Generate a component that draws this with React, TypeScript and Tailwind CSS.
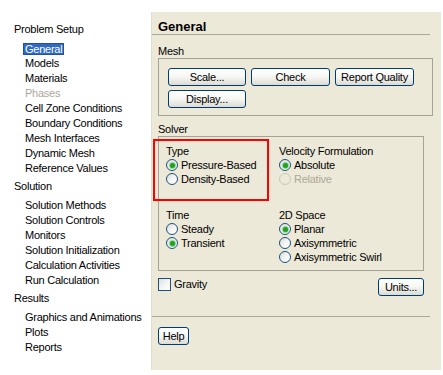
import React from "react";

const font = "font-['Liberation_Sans',Arial,sans-serif]";

function TreeHeader({ children }: { children: React.ReactNode }) {
  return <div className="h-[15px] leading-[15px] pl-[14px] text-black">{children}</div>;
}

function TreeItem({ children, selected, disabled }: { children: React.ReactNode; selected?: boolean; disabled?: boolean }) {
  return (
    <div className="h-[15px] leading-[15px] pl-[25px]">
      {selected ? (
        <span className="inline-block align-middle leading-[11px] h-[12px] bg-[#316ac5] text-white border border-[#25509f] px-[1px] -ml-[2px]">
          {children}
        </span>
      ) : (
        <span className={disabled ? "text-[#aca899]" : "text-black"}>{children}</span>
      )}
    </div>
  );
}

function XPButton({ children, w }: { children: React.ReactNode; w: string }) {
  return (
    <div
      className={`${w} h-[18px] rounded-[3px] border border-[#003c74] bg-gradient-to-b from-white via-[#f6f6f3] to-[#dcdbd2] flex items-center justify-center text-black leading-none`}
    >
      {children}
    </div>
  );
}

function Radio({ label, checked, disabled }: { label: string; checked?: boolean; disabled?: boolean }) {
  return (
    <div className="h-[14px] flex items-center">
      <div
        className={`w-[12px] h-[12px] rounded-full border flex items-center justify-center ${
          disabled
            ? "border-[#cac8bb] bg-[#ece9d8]"
            : "border-[#1c5180] bg-gradient-to-br from-[#dcdcd7] via-[#f4f4f2] to-white"
        }`}
      >
        {checked && <div className="w-[5px] h-[5px] rounded-full bg-[#21a121] shadow-[0_0_1px_1px_#8ed38e]" />}
      </div>
      <span className={`ml-[3px] ${disabled ? "text-[#aca899]" : "text-black"}`}>{label}</span>
    </div>
  );
}

function Group({ title, children }: { title: string; children: React.ReactNode }) {
  return (
    <div>
      <div className="h-[13px] leading-[13px] text-black">{title}</div>
      {children}
    </div>
  );
}

export default function App() {
  return (
    <div className={`${font} text-[11px] tracking-[-0.25px] w-[443px] h-[375px] bg-white flex overflow-hidden`}>
      {/* Tree */}
      <div className="w-[151px] shrink-0 pt-[22px]">
        <TreeHeader>Problem Setup</TreeHeader>
        <div className="mt-[4px]">
          <TreeItem selected>General</TreeItem>
          <TreeItem>Models</TreeItem>
          <TreeItem>Materials</TreeItem>
          <TreeItem disabled>Phases</TreeItem>
          <TreeItem>Cell Zone Conditions</TreeItem>
          <TreeItem>Boundary Conditions</TreeItem>
          <TreeItem>Mesh Interfaces</TreeItem>
          <TreeItem>Dynamic Mesh</TreeItem>
          <TreeItem>Reference Values</TreeItem>
        </div>
        <div className="mt-[3px]">
          <TreeHeader>Solution</TreeHeader>
        </div>
        <div className="mt-[4px]">
          <TreeItem>Solution Methods</TreeItem>
          <TreeItem>Solution Controls</TreeItem>
          <TreeItem>Monitors</TreeItem>
          <TreeItem>Solution Initialization</TreeItem>
          <TreeItem>Calculation Activities</TreeItem>
          <TreeItem>Run Calculation</TreeItem>
        </div>
        <div className="mt-[3px]">
          <TreeHeader>Results</TreeHeader>
        </div>
        <div className="mt-[4px]">
          <TreeItem>Graphics and Animations</TreeItem>
          <TreeItem>Plots</TreeItem>
          <TreeItem>Reports</TreeItem>
        </div>
      </div>

      {/* Panel */}
      <div className="mt-[12px] w-[290px] h-[358px] bg-[#ece9d8] shrink-0 border-l border-[#e2dfcd]">
        <div className="h-[23px] mr-[11px] border-b border-[#aca899] pl-[6px] pt-[7px]">
          <div className="text-[13px] font-bold leading-[15px] tracking-normal text-black">General</div>
        </div>

        <div className="ml-[6px]">
          <div className="mt-[10px] h-[13px] leading-[13px] text-black">Mesh</div>
          <div className="w-[275px] border border-[#a5a394] pt-[9px] pl-[9px] pb-[7px]">
            <div className="flex gap-[5px]">
              <XPButton w="w-[78px]">Scale...</XPButton>
              <XPButton w="w-[79px]">Check</XPButton>
              <XPButton w="w-[79px]">Report Quality</XPButton>
            </div>
            <div className="mt-[4px] flex">
              <XPButton w="w-[78px]">Display...</XPButton>
            </div>
          </div>

          <div className="mt-[7px] h-[13px] leading-[13px] text-black">Solver</div>
          <div className="relative w-[266px] border border-[#a5a394] pt-[8px] pl-[7px] pb-[6px]">
            <div className="flex">
              <div className="w-[113px]">
                <Group title="Type">
                  <Radio label="Pressure-Based" checked />
                  <Radio label="Density-Based" />
                </Group>
              </div>
              <div>
                <Group title="Velocity Formulation">
                  <Radio label="Absolute" checked />
                  <Radio label="Relative" disabled />
                </Group>
              </div>
            </div>
            <div className="flex mt-[23px]">
              <div className="w-[113px]">
                <Group title="Time">
                  <Radio label="Steady" />
                  <Radio label="Transient" checked />
                </Group>
              </div>
              <div>
                <Group title="2D Space">
                  <Radio label="Planar" checked />
                  <Radio label="Axisymmetric" />
                  <Radio label="Axisymmetric Swirl" />
                </Group>
              </div>
            </div>
            <div className="absolute left-[-6px] top-[2px] w-[116px] h-[62px] border-2 border-[#ff0000]" />
          </div>

          <div className="mt-[7px] w-[266px] flex justify-between items-start">
            <div className="flex items-center h-[13px]">
              <div className="w-[13px] h-[13px] border border-[#1c5180] bg-gradient-to-br from-[#dcdcd7] via-[#f4f4f2] to-white" />
              <span className="ml-[3px] text-black">Gravity</span>
            </div>
            <XPButton w="w-[46px]">Units...</XPButton>
          </div>
        </div>

        <div className="mt-[20px] w-[278px] border-t border-[#aca899]" />
        <div className="ml-[6px] mt-[10px]">
          <XPButton w="w-[31px]">Help</XPButton>
        </div>
      </div>
    </div>
  );
}
